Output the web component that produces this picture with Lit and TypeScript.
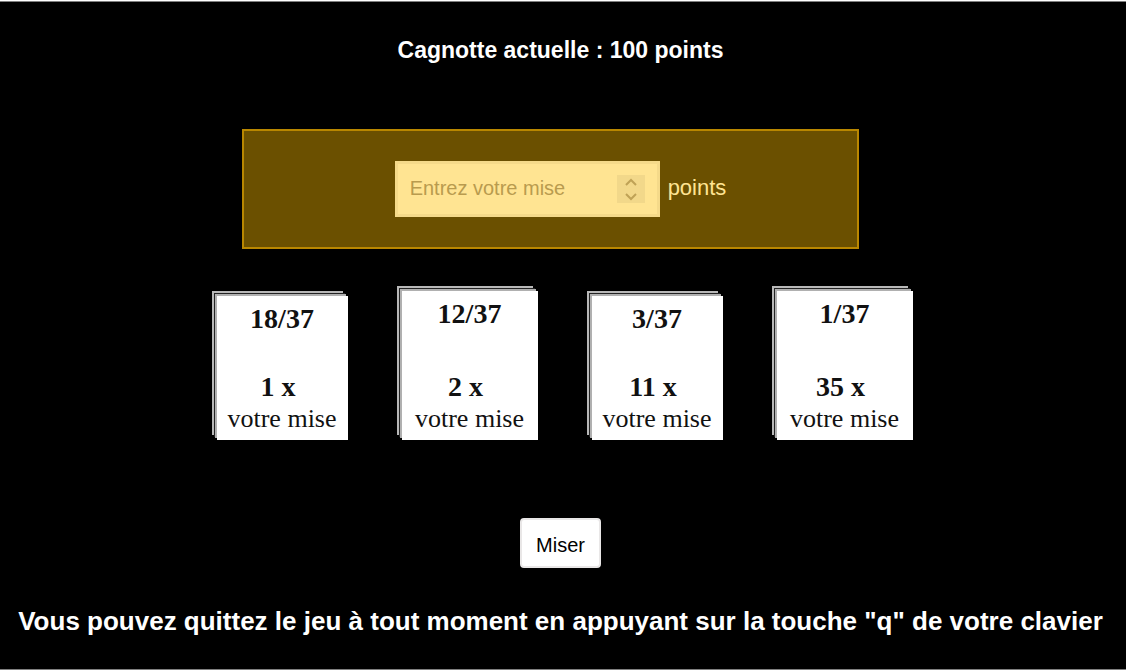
import { LitElement, html, css } from "lit";
import { customElement, property, query, state } from "lit/decorators.js";

interface Deck {
  odds: string;
  factor: number;
  large: boolean;
}

const DECKS: Deck[] = [
  { odds: "18/37", factor: 1, large: false },
  { odds: "12/37", factor: 2, large: true },
  { odds: "3/37", factor: 11, large: false },
  { odds: "1/37", factor: 35, large: true },
];

@customElement("card-deck")
class CardDeck extends LitElement {
  @property() odds = "";
  @property({ type: Number }) factor = 1;
  @property({ type: Boolean, reflect: true }) large = false;

  static styles = css`
    :host {
      display: block;
      /* room for the two cards peeking out behind the front one */
      padding: 5px 0 0 5px;
    }
    .card {
      display: flex;
      flex-direction: column;
      align-items: center;
      width: 131px;
      height: 144px;
      padding: 7px 0 5px;
      box-sizing: border-box;
      border: 0;
      background: #fff;
      color: #111;
      font-family: "Liberation Serif", serif;
      font-size: 26px;
      line-height: 32px;
      white-space: nowrap;
      box-shadow: -2px -2px #b0b0b0, -3px -3px #222, -5px -5px #b8b8b8;
    }
    :host([large]) .card {
      width: 136px;
      height: 149px;
    }
    .strong {
      font-size: 28px;
      font-weight: bold;
    }
    .payout {
      margin-top: auto;
      padding-right: 8px;
    }
  `;

  render() {
    return html`
      <button class="card" type="button">
        <span class="strong">${this.odds}</span>
        <span class="strong payout">${this.factor} x</span>
        <span>votre mise</span>
      </button>
    `;
  }
}

@customElement("app-root")
class AppRoot extends LitElement {
  @state() private points = 100;
  @query("#stake") private stake!: HTMLInputElement;

  static styles = css`
    :host {
      display: block;
    }
    .page {
      display: flex;
      flex-direction: column;
      align-items: center;
      min-height: 100vh;
      box-sizing: border-box;
      padding: 34px 5px 0 0;
      border-top: 1px solid #fff;
      border-bottom: 1px solid #fff;
      box-shadow: inset 0 1px #808080, inset 0 -1px #808080;
      background: #000;
      color: #fff;
      font-family: "Liberation Sans", Arial, sans-serif;
    }
    .bank {
      margin: 0;
      font-size: 23px;
      line-height: 30px;
    }
    .bet {
      display: flex;
      flex-direction: column;
      align-items: center;
      width: 100%;
    }
    .stake {
      display: flex;
      justify-content: center;
      align-items: center;
      gap: 8px;
      width: 55%;
      box-sizing: border-box;
      margin: 64px 20px 0 0;
      padding: 30px 0 30px 20px;
      border: 2px solid #b98700;
      background: #6b5000;
      color: #ffe492;
      font-size: 22px;
    }
    .unit {
      padding-bottom: 2px;
    }
    .field {
      display: flex;
      align-items: center;
      width: 265px;
      height: 56px;
      box-sizing: border-box;
      padding: 0 12px;
      border: 3px solid #f5da8a;
      background: #ffe492;
    }
    .amount {
      flex: 1;
      min-width: 0;
      padding: 0 0 2px;
      border: 0;
      outline: 0;
      background: none;
      color: #6b5000;
      font: 20px "Liberation Sans", Arial, sans-serif;
      appearance: textfield;
    }
    .amount::placeholder {
      color: #b99b4e;
      opacity: 1;
    }
    .spin {
      display: flex;
      flex-direction: column;
      width: 28px;
      background: #f2d88a;
    }
    .step {
      display: flex;
      justify-content: center;
      align-items: center;
      height: 14px;
      padding: 0;
      border: 0;
      background: none;
      color: #bfa256;
    }
    .decks {
      display: flex;
      justify-content: center;
      align-items: flex-end;
      gap: 49px;
      margin-top: 37px;
      padding-left: 3px;
    }
    .submit {
      margin-top: 78px;
      width: 81px;
      height: 50px;
      border: 2px solid #e9e7e7;
      border-radius: 4px;
      padding: 4px 0 0;
      background: #fff;
      color: #000;
      font: 20px "Liberation Sans", Arial, sans-serif;
    }
    .hint {
      margin: 37px 0 0;
      font-size: 26px;
      line-height: 32px;
      font-weight: bold;
      text-align: center;
    }
  `;

  private step(delta: number) {
    const next = Number(this.stake.value) + delta;
    this.stake.value = String(Math.min(this.points, Math.max(0, next)));
  }

  render() {
    return html`
      <main class="page">
        <h1 class="bank">Cagnotte actuelle : ${this.points} points</h1>
        <form class="bet" @submit=${(e: Event) => e.preventDefault()}>
          <div class="stake">
            <div class="field">
              <input class="amount" id="stake" type="number" placeholder="Entrez votre mise" />
              <div class="spin">
                <button class="step" type="button" aria-label="Augmenter" @click=${() => this.step(1)}>
                  <svg width="14" height="9" viewBox="0 0 14 9" fill="none" stroke="currentColor" stroke-width="2">
                    <path d="M2 7 L7 2 L12 7" />
                  </svg>
                </button>
                <button class="step" type="button" aria-label="Diminuer" @click=${() => this.step(-1)}>
                  <svg width="14" height="9" viewBox="0 0 14 9" fill="none" stroke="currentColor" stroke-width="2">
                    <path d="M2 2 L7 7 L12 2" />
                  </svg>
                </button>
              </div>
            </div>
            <label class="unit" for="stake">points</label>
          </div>
          <div class="decks">
            ${DECKS.map(
              (d) => html`<card-deck .odds=${d.odds} .factor=${d.factor} .large=${d.large}></card-deck>`
            )}
          </div>
          <button class="submit" type="submit">Miser</button>
        </form>
        <p class="hint">Vous pouvez quittez le jeu à tout moment en appuyant sur la touche "q" de votre clavier</p>
      </main>
    `;
  }
}
